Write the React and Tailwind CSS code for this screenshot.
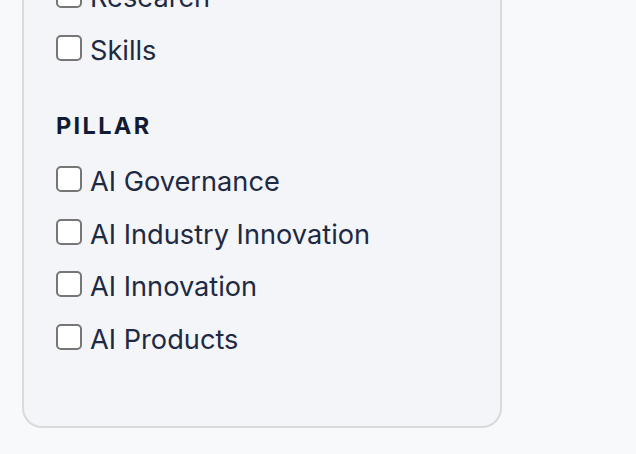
import React from "react";

const pillars = ["AI Governance", "AI Industry Innovation", "AI Innovation", "AI Products"];

function CheckRow({ label }) {
  return (
    <label className="flex h-[52.6px] items-center gap-[8px] cursor-pointer">
      <input
        type="checkbox"
        className="m-0 h-[26px] w-[26px] shrink-0 appearance-none rounded-[5px] border-2 border-[#767676] bg-white"
      />
      <span className="mt-[6px] text-[27.2px] leading-[34px] text-[#1e2942]">{label}</span>
    </label>
  );
}

export default function App() {
  return (
    <div
      className="flex h-[454px] flex-col justify-end overflow-hidden bg-[#f8f9fb] pb-[26px] pl-[22px]"
      style={{ fontFamily: "Inter, 'Noto Sans', sans-serif" }}
    >
      <aside className="w-[480px] rounded-b-[20px] border-2 border-t-0 border-[#d9dade] bg-[#f3f5f9] pb-[62.7px] pl-[32px]">
        <div className="flex flex-col">
          <CheckRow label="Research" />
          <CheckRow label="Skills" />
        </div>
        <h3 className="mt-[38px] text-[23.5px] font-bold leading-[28px] tracking-[0.1em] text-[#111b33]">
          PILLAR
        </h3>
        <div className="mt-[12.7px] flex flex-col">
          {pillars.map((item) => (
            <CheckRow key={item} label={item} />
          ))}
        </div>
      </aside>
    </div>
  );
}
